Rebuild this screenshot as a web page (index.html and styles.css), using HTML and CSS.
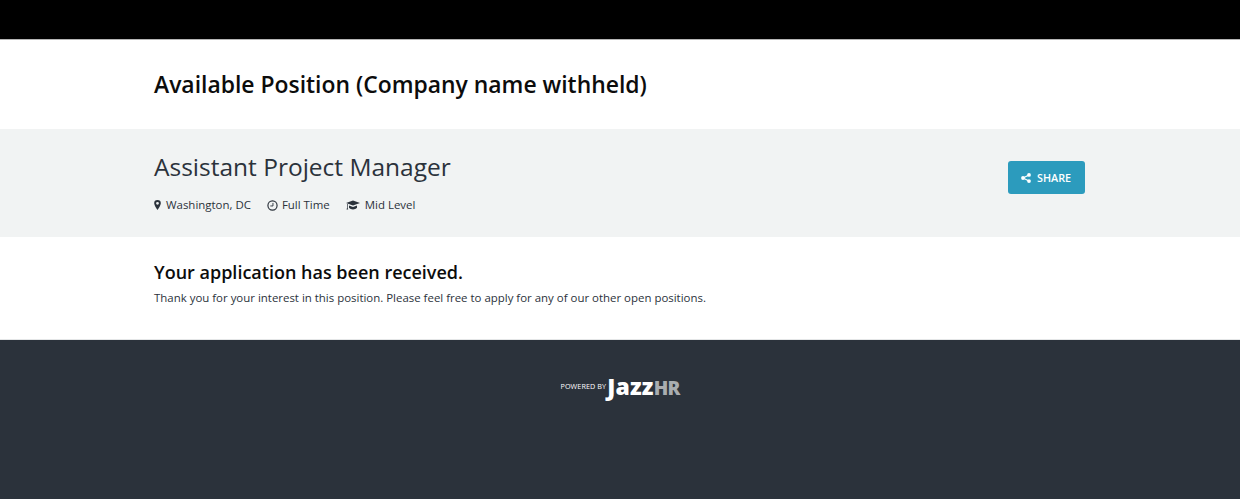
FILE: index.html
```html
<!DOCTYPE html>
<html lang="en">
<head>
  <meta charset="UTF-8" />
  <meta name="viewport" content="width=device-width, initial-scale=1.0" />
  <title>Assistant Project Manager</title>
  <link rel="stylesheet" href="styles.css">
</head>
<body>
  <div class="top-bar"></div>

  <header class="company">
    <div class="wrap">
      <h1>Available Position (Company name withheld)</h1>
    </div>
  </header>

  <section class="job">
    <div class="wrap job-row">
      <div>
        <h2>Assistant Project Manager</h2>
        <ul class="job-meta">
          <li>
            <svg class="icon icon-pin" viewBox="0 0 8 12"><path fill-rule="evenodd" d="M4 0a4 4 0 0 0-4 4c0 2.2 2.6 6 4 8 1.400-2 4-5.800 4-8a4 4 0 0 0-4-4zm0 2.300a1.700 1.700 0 1 1 0 3.400 1.700 1.700 0 0 1 0-3.400z"/></svg>
            Washington, DC
          </li>
          <li>
            <svg class="icon icon-clock" viewBox="0 0 12 12"><circle cx="6" cy="6" r="5" fill="none" stroke="currentColor" stroke-width="1.300"/><path d="M6.500 3.200v3.300H3.600" fill="none" stroke="currentColor" stroke-width="1"/></svg>
            Full Time
          </li>
          <li>
            <svg class="icon icon-cap" viewBox="0 0 14 10"><path d="M7 .5 0 3l7 2.600L14 3zM3 5.500v2.300C4 9 5.500 9.500 7 9.500s3-.5 4-1.700V5.500L7 7zM1 3.900h.7v4l.5 1.600H.5L1 7.900z"/></svg>
            Mid Level
          </li>
        </ul>
      </div>
      <a class="share-btn" href="#">
        <svg class="icon icon-share" viewBox="0 0 10 10"><circle cx="2" cy="5" r="1.900"/><circle cx="8" cy="1.900" r="1.900"/><circle cx="8" cy="8.100" r="1.900"/><path d="M2 5l6-3.100M2 5l6 3.100" stroke="currentColor" stroke-width="1.100"/></svg>
        SHARE
      </a>
    </div>
  </section>

  <section class="message">
    <div class="wrap">
      <h3>Your application has been received.</h3>
      <p>Thank you for your interest in this position. Please feel free to apply for any of our other open positions.</p>
    </div>
  </section>

  <footer class="site-footer">
    <span class="powered">POWERED BY</span>
    <span class="logo">Jazz<span class="logo-hr">HR</span></span>
  </footer>
</body>
</html>
```

FILE: styles.css
```css
* {
  box-sizing: border-box;
}
body {
  font-family: 'Open Sans', 'Liberation Sans', sans-serif;
  color: #2b323b;
  background-color: #fff;
  margin: 0;
  min-height: 499px;
  display: flex;
  flex-direction: column;
}
.wrap {
  width: 931px;
  margin-left: 154px;
}
.top-bar {
  height: 40px;
  background-color: #000;
  border-bottom: 1px solid #b5b5b5;
}
.company {
  height: 89px;
  display: flex;
  align-items: center;
}
h1 {
  margin: 0;
  color: #0c0c0c;
  font-size: 22.900px;
  line-height: 32px;
  font-weight: 600;
}
.job {
  height: 108px;
  background-color: #f1f3f3;
  padding-top: 21px;
}
.job-row {
  display: flex;
  justify-content: space-between;
  align-items: flex-start;
}
h2 {
  margin: 0;
  font-size: 24.500px;
  line-height: 33px;
  font-weight: 400;
}
.job-meta {
  list-style: none;
  margin: 13px 0 0;
  padding: 0;
  display: flex;
  gap: 16px;
  font-size: 11.450px;
  line-height: 18px;
}
.job-meta li {
  display: flex;
  align-items: center;
  gap: 5px;
}
.icon {
  display: block;
  fill: currentColor;
  flex: none;
}
.icon-pin {
  width: 7px;
  height: 10px;
}
.icon-clock {
  width: 11px;
  height: 11px;
  margin-right: -1px;
}
.icon-cap {
  width: 14px;
  height: 10px;
}
.share-btn {
  margin-top: 11px;
  width: 77px;
  height: 33px;
  padding-left: 13px;
  background-color: #2c9bbd;
  border-radius: 3px;
  color: #fff;
  font-size: 10.800px;
  line-height: 31px;
  font-weight: 600;
  text-decoration: none;
  display: flex;
  align-items: center;
  gap: 6px;
}
.icon-share {
  width: 10px;
  height: 10px;
}
.message {
  height: 103px;
  padding-top: 23px;
  border-bottom: 1px solid #e4e6e7;
}
h3 {
  margin: 0;
  color: #0c0c0c;
  font-size: 18px;
  line-height: 24px;
  font-weight: 600;
}
.message p {
  margin: 5px 0 0;
  font-size: 11.450px;
  line-height: 18px;
}
.site-footer {
  flex: 1;
  background-color: #2b323b;
  display: flex;
  justify-content: center;
  align-items: flex-start;
  gap: 1px;
  padding: 33px 0 0 0;
  color: #fff;
}
.powered {
  font-size: 7.200px;
  line-height: 26px;
  font-weight: 500;
  letter-spacing: 0.100px;
}
.logo {
  font-size: 23px;
  line-height: 26px;
  font-weight: 800;
  letter-spacing: 0.200px;
}
.logo-hr {
  color: #a9adb0;
  font-size: 19px;
  letter-spacing: -0.800px;
}
```
